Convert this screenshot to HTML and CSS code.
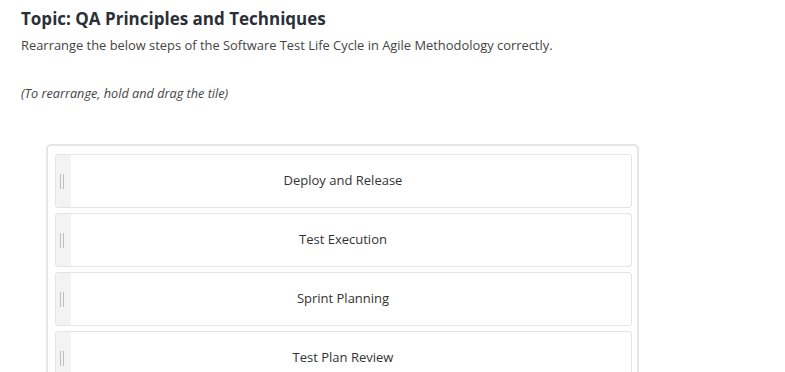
FILE: index.html
```html
<!DOCTYPE html>
<html lang="en">
<head>
  <meta charset="UTF-8">
  <title>QA Principles and Techniques</title>
  <link rel="stylesheet" href="styles.css">
</head>
<body>
  <div class="page">
    <h2 class="topic">Topic: QA Principles and Techniques</h2>
    <p class="question">Rearrange the below steps of the Software Test Life Cycle in Agile Methodology correctly.</p>
    <p class="hint">(To rearrange, hold and drag the tile)</p>

    <div class="sort-box">
      <div class="tile">
        <div class="handle"><span></span><span></span></div>
        <div class="tile-text">Deploy and Release</div>
      </div>
      <div class="tile">
        <div class="handle"><span></span><span></span></div>
        <div class="tile-text">Test Execution</div>
      </div>
      <div class="tile">
        <div class="handle"><span></span><span></span></div>
        <div class="tile-text">Sprint Planning</div>
      </div>
      <div class="tile">
        <div class="handle"><span></span><span></span></div>
        <div class="tile-text">Test Plan Review</div>
      </div>
    </div>
  </div>
</body>
</html>
```

FILE: styles.css
```css
    body {
      font-family: "Open Sans", sans-serif;
      background: #ffffff;
      margin: 0;
      color: #333;
      overflow: hidden;
    }

    .page {
      padding: 8px 21px;
    }

    .topic {
      font-size: 17px;
      font-weight: 700;
      color: #2b2f38;
      margin: 0;
      line-height: 22px;
    }

    .question {
      font-size: 12.9px;
      color: #444;
      margin: 6px 0 0;
      line-height: 18px;
    }

    .hint {
      font-size: 12.7px;
      font-style: italic;
      color: #444;
      margin: 31px 0 0;
      line-height: 16px;
    }

    .sort-box {
      width: 577px;
      margin: 43px 0 0 25px;
      border: 2px solid #e6e6e9;
      border-radius: 5px;
      padding: 8px 5px 7px 7px;
      display: flex;
      flex-direction: column;
      gap: 5px;
    }

    .tile {
      display: flex;
      height: 52px;
      border: 1px solid #e4e4e7;
      border-radius: 3px;
      background: white;
      overflow: hidden;
    }

    .handle {
      box-sizing: border-box;
      width: 15px;
      background: #f3f3f6;
      display: flex;
      align-items: center;
      padding-left: 4px;
    }

    .handle span {
      width: 1px;
      height: 15px;
      background: #bdbdc2;
      margin-right: 2px;
    }

    .tile-text {
      flex-grow: 1;
      display: flex;
      align-items: center;
      justify-content: center;
      font-size: 13px;
      color: #333;
      padding: 0 16px 2px 0;
    }
```
